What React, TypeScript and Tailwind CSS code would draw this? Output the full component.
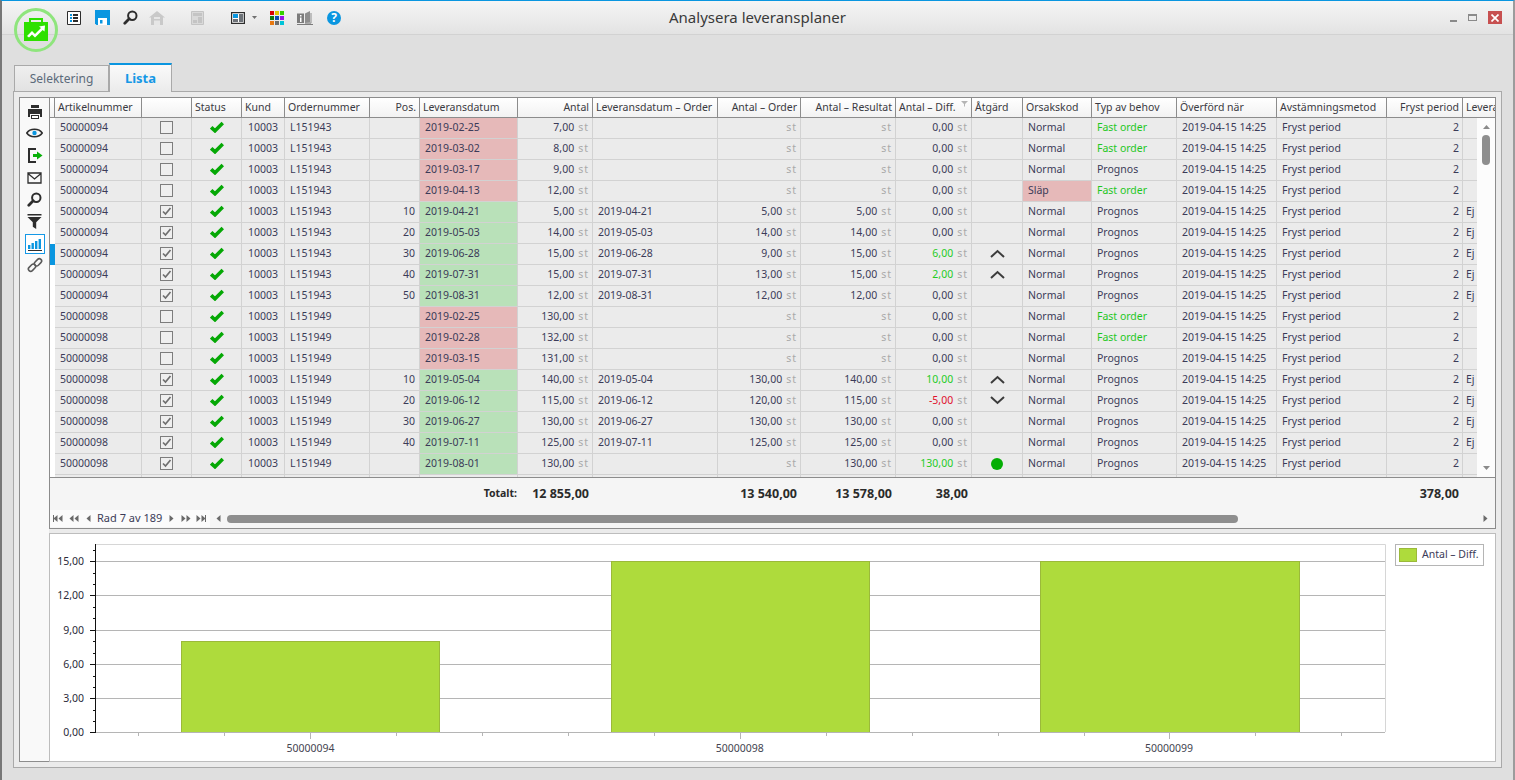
import type { ReactNode } from 'react';

const COLS =
  'grid grid-cols-[5px_87px_50px_50px_43px_85px_50px_98px_75px_125px_83px_95px_76px_51px_69px_85px_100px_110px_76px_32px]';

type Row = {
  art: string;
  order: string;
  pos: string;
  date: string;
  ok: boolean;
  antal: string;
  orderDate: string;
  antalOrder: string;
  result: string;
  diff: string;
  tone?: 'up' | 'down';
  action?: 'up' | 'down' | 'dot';
  reason: string;
  typ: string;
  ej: boolean;
};

function open(art: string, order: string, date: string, antal: string, typ: string, reason = 'Normal'): Row {
  return { art, order, pos: '', date, ok: false, antal, orderDate: '', antalOrder: '', result: '', diff: '0,00', reason, typ, ej: false };
}

function done(
  art: string,
  order: string,
  pos: string,
  date: string,
  antal: string,
  antalOrder: string,
  diff = '0,00',
  tone?: 'up' | 'down',
  action?: 'up' | 'down',
): Row {
  return { art, order, pos, date, ok: true, antal, orderDate: date, antalOrder, result: antal, diff, tone, action, reason: 'Normal', typ: 'Prognos', ej: true };
}

const rows: Row[] = [
  open('50000094', 'L151943', '2019-02-25', '7,00', 'Fast order'),
  open('50000094', 'L151943', '2019-03-02', '8,00', 'Fast order'),
  open('50000094', 'L151943', '2019-03-17', '9,00', 'Prognos'),
  open('50000094', 'L151943', '2019-04-13', '12,00', 'Fast order', 'Släp'),
  done('50000094', 'L151943', '10', '2019-04-21', '5,00', '5,00'),
  done('50000094', 'L151943', '20', '2019-05-03', '14,00', '14,00'),
  done('50000094', 'L151943', '30', '2019-06-28', '15,00', '9,00', '6,00', 'up', 'up'),
  done('50000094', 'L151943', '40', '2019-07-31', '15,00', '13,00', '2,00', 'up', 'up'),
  done('50000094', 'L151943', '50', '2019-08-31', '12,00', '12,00'),
  open('50000098', 'L151949', '2019-02-25', '130,00', 'Fast order'),
  open('50000098', 'L151949', '2019-02-28', '132,00', 'Fast order'),
  open('50000098', 'L151949', '2019-03-15', '131,00', 'Prognos'),
  done('50000098', 'L151949', '10', '2019-05-04', '140,00', '130,00', '10,00', 'up', 'up'),
  done('50000098', 'L151949', '20', '2019-06-12', '115,00', '120,00', '-5,00', 'down', 'down'),
  done('50000098', 'L151949', '30', '2019-06-27', '130,00', '130,00'),
  done('50000098', 'L151949', '40', '2019-07-11', '125,00', '125,00'),
  {
    art: '50000098',
    order: 'L151949',
    pos: '',
    date: '2019-08-01',
    ok: true,
    antal: '130,00',
    orderDate: '',
    antalOrder: '',
    result: '130,00',
    diff: '130,00',
    tone: 'up',
    action: 'dot',
    reason: 'Normal',
    typ: 'Prognos',
    ej: false,
  },
];

const headers: { label: string; right?: boolean }[] = [
  { label: 'Artikelnummer' },
  { label: '' },
  { label: 'Status' },
  { label: 'Kund' },
  { label: 'Ordernummer' },
  { label: 'Pos.', right: true },
  { label: 'Leveransdatum' },
  { label: 'Antal', right: true },
  { label: 'Leveransdatum – Order' },
  { label: 'Antal – Order', right: true },
  { label: 'Antal – Resultat', right: true },
  { label: 'Antal – Diff.' },
  { label: 'Åtgärd' },
  { label: 'Orsakskod' },
  { label: 'Typ av behov' },
  { label: 'Överförd när' },
  { label: 'Avstämningsmetod' },
  { label: 'Fryst period', right: true },
  { label: 'Leverans' },
];

function Cell({ children, className = '' }: { children?: ReactNode; className?: string }) {
  return (
    <div className={`flex items-center overflow-hidden whitespace-nowrap border-r border-b border-[#d2d2d2] ${className}`}>
      {children}
    </div>
  );
}

function Unit({ value, className = '' }: { value?: string; className?: string }) {
  return (
    <Cell className="justify-end pr-[3px]">
      {value && <span className={className}>{value}</span>}
      <span className="ml-[4px] tracking-[1px] text-[#a9a9a9]">st</span>
    </Cell>
  );
}

function Check() {
  return (
    <svg className="mb-[2px]" width="14" height="12" viewBox="0 0 14 12">
      <path d="M1.2 6.300 L5 9.800 L12.800 2" fill="none" stroke="#05a805" strokeWidth="3.600" />
    </svg>
  );
}

function Checkbox({ on }: { on: boolean }) {
  return (
    <div className="mb-[2px] flex h-[13px] w-[13px] items-center justify-center border border-[#7d7d7d] bg-[#efefef]">
      {on && (
        <svg width="11" height="11" viewBox="0 0 11 11">
          <path d="M2 5.500 L4.500 8 L9.500 2" fill="none" stroke="#6f6f6f" strokeWidth="1.700" />
        </svg>
      )}
    </div>
  );
}

function Action({ kind }: { kind?: Row['action'] }) {
  if (kind === 'dot') return <div className="mb-[1px] h-[12px] w-[12px] rounded-full bg-[#04ae04]" />;
  if (!kind) return null;
  return (
    <svg className="mb-[2px]" width="15" height="9" viewBox="0 0 15 9">
      <path d={kind === 'up' ? 'M1 8 L7.500 2 L14 8' : 'M1 1 L7.500 7 L14 1'} fill="none" stroke="#3c3c3c" strokeWidth="2" />
    </svg>
  );
}

function DataRow({ row, active }: { row: Row; active: boolean }) {
  const diffColor = row.tone === 'up' ? 'text-[#1fcb1f]' : row.tone === 'down' ? 'text-[#e0102c]' : '';
  return (
    <div className={`${COLS} h-[21px]`}>
      <div className={active ? 'bg-[#0a96e0]' : 'bg-white'} />
      <Cell className="pl-[5px]">{row.art}</Cell>
      <Cell className="justify-center">
        <Checkbox on={row.ok} />
      </Cell>
      <Cell className="justify-center">
        <Check />
      </Cell>
      <Cell className="pl-[6px]">10003</Cell>
      <Cell className="pl-[5px]">{row.order}</Cell>
      <Cell className="justify-end pr-[4px]">{row.pos}</Cell>
      <Cell className={`pl-[5px] ${row.ok ? 'bg-[#b9e1b9]' : 'bg-[#e6b9b9]'}`}>{row.date}</Cell>
      <Unit value={row.antal} />
      <Cell className="pl-[5px]">{row.orderDate}</Cell>
      <Unit value={row.antalOrder} />
      <Unit value={row.result} />
      <Unit value={row.diff} className={diffColor} />
      <Cell className="justify-center">
        <Action kind={row.action} />
      </Cell>
      <Cell className={`pl-[5px] ${row.reason === 'Släp' ? 'bg-[#e6b9b9]' : ''}`}>{row.reason}</Cell>
      <Cell className={`pl-[5px] ${row.typ === 'Fast order' ? 'text-[#1fc71f]' : ''}`}>{row.typ}</Cell>
      <Cell className="pl-[5px]">2019-04-15 14:25</Cell>
      <Cell className="pl-[5px]">Fryst period</Cell>
      <Cell className="justify-end pr-[3px]">2</Cell>
      <Cell className="pl-[3px]">{row.ej ? 'Ej' : ''}</Cell>
    </div>
  );
}

function PrinterIcon() {
  return (
    <svg width="16" height="16" viewBox="0 0 16 16">
      <path d="M4 1h8v3H4z M1 5h14v8h-2v-3H3v3H1z M4 11h8v4H4z" fill="#2d2d2d" />
      <path d="M5 12h6v2H5z" fill="#fff" />
    </svg>
  );
}

function EyeIcon() {
  return (
    <svg width="17" height="12" viewBox="0 0 17 12">
      <path d="M0.800 6 C4 1 13 1 16.200 6 C13 11 4 11 0.800 6 Z" fill="none" stroke="#2d2d2d" strokeWidth="1.600" />
      <circle cx="8.500" cy="6" r="2.200" fill="#0a96e0" />
    </svg>
  );
}

function ExportIcon() {
  return (
    <svg width="16" height="16" viewBox="0 0 16 16">
      <path d="M9 2H2V15H9" fill="none" stroke="#2d2d2d" strokeWidth="2" />
      <path d="M6 7h4V4.500L15.500 8.500 10 12.500V10H6z" fill="#08b008" />
    </svg>
  );
}

function MailIcon() {
  return (
    <svg width="15" height="12" viewBox="0 0 15 12">
      <path d="M1 1h13v10H1z M1 1.500l6.500 5.500L14 1.500" fill="none" stroke="#2d2d2d" strokeWidth="1.300" />
    </svg>
  );
}

function SearchIcon() {
  return (
    <svg width="15" height="15" viewBox="0 0 15 15">
      <circle cx="9.300" cy="5.700" r="4.200" fill="none" stroke="#2d2d2d" strokeWidth="2" />
      <path d="M6.200 8.800 L1.800 13.200" stroke="#2d2d2d" strokeWidth="2.800" strokeLinecap="round" />
    </svg>
  );
}

function FilterIcon() {
  return (
    <svg width="15" height="15" viewBox="0 0 15 15">
      <path d="M0.500 0h14v1.600H0.500z M0.500 3h14L9.200 8.300V15L5.800 12.800V8.300z" fill="#2d2d2d" />
    </svg>
  );
}

function BarsIcon() {
  return (
    <svg width="16" height="15" viewBox="0 0 16 15">
      <path d="M1 8h2.400v4H1z M4.500 6h2.400v6H4.500z M8 4h2.400v8H8z M11.600 2H14v10h-2.400z" fill="#0a96e0" />
      <path d="M1 13.500h14" stroke="#2d2d2d" strokeWidth="1" />
    </svg>
  );
}

function LinkIcon() {
  return (
    <svg width="16" height="16" viewBox="0 0 16 16" fill="none" stroke="#5a5a5a" strokeWidth="1.600">
      <rect x="0.900" y="8.400" width="8.200" height="4.600" rx="2.300" transform="rotate(-45 5 10.700)" />
      <rect x="6.900" y="3" width="8.200" height="4.600" rx="2.300" transform="rotate(-45 11 5.300)" />
    </svg>
  );
}

function Logo() {
  return (
    <svg className="absolute top-[6px] left-[12px]" width="44" height="46" viewBox="0 0 44 46">
      <circle cx="22" cy="23" r="20.500" fill="none" stroke="#8fe57d" strokeWidth="3" />
      <path d="M16 16v-4h12v4" fill="none" stroke="#2ee000" strokeWidth="2" />
      <path d="M10 15h24v19H10z" fill="#2ee000" />
      <path d="M13 29l5-5 3 3 6-6-2-1.500 6-1-.5 6-1.800-1.600-7.700 7.600-3-3-3 3z" fill="#fff" />
    </svg>
  );
}

function ListIcon() {
  return (
    <svg width="14" height="14" viewBox="0 0 14 14">
      <path d="M0.500 0.500h13v13h-13z" fill="#fff" stroke="#2d2d2d" />
      <path d="M3 3h2v2H3z M3 6h2v2H3z M3 9h2v2H3z" fill="#0a96e0" />
      <path d="M6 3h5v2H6z M6 6h5v2H6z M6 9h5v2H6z" fill="#2d2d2d" />
    </svg>
  );
}

function SaveIcon() {
  return (
    <svg width="15" height="15" viewBox="0 0 15 15">
      <path d="M0 0h15v15H1.500L0 13.500z" fill="#0a96e0" />
      <path d="M3 8h9v7H3z" fill="#fff" />
      <path d="M5 10h2.500v3.500H5z" fill="#0a96e0" />
    </svg>
  );
}

function HomeIcon() {
  return (
    <svg width="16" height="14" viewBox="0 0 16 14">
      <path d="M8 0L16 6.500H14V14H2V6.500H0z" fill="#c9c9c9" />
      <path d="M5 6h6v2H5z M5 9.500h6V14H5z" fill="#e6e6e6" />
    </svg>
  );
}

function FormIcon() {
  return (
    <svg width="13" height="14" viewBox="0 0 13 14">
      <path d="M0.500 0.500h12v13H0.500z" fill="#d9d9d9" stroke="#c4c4c4" />
      <path d="M2 2h9v3H2z M7 6h4v6H7z M2 9h4v3H2z" fill="#c4c4c4" />
    </svg>
  );
}

function LayoutIcon() {
  return (
    <svg width="14" height="12" viewBox="0 0 14 12">
      <path d="M0.600 0.600h12.800v10.800H0.600z" fill="#fff" stroke="#2d2d2d" strokeWidth="1.200" />
      <path d="M2 2h5v4H2z" fill="#0a96e0" />
      <path d="M8 2h4.200v8H8z M2 7h5v3H2z" fill="#6d7278" />
    </svg>
  );
}

function AppsIcon() {
  const colors = ['#d80000', '#e0c800', '#35d000', '#0f7a10', '#0a4fb0', '#9a10e8', '#e87810', '#6e6e6e', '#00c4d8'];
  return (
    <div className="grid h-[14px] w-[14px] grid-cols-3 gap-px">
      {colors.map((c) => (
        <div key={c} style={{ backgroundColor: c }} />
      ))}
    </div>
  );
}

function BookIcon() {
  return (
    <svg width="16" height="14" viewBox="0 0 16 14">
      <path d="M0 2.500h7V12H0z" fill="#7b7b7b" />
      <path d="M8 2.500L13 0v11.500L8 12z" fill="#8d8d8d" />
      <path d="M14 2v10.200H8" fill="none" stroke="#8d8d8d" />
      <path d="M3 4h1.500v1.500H3z M3 6.500h1.500V11H3z" fill="#fff" />
      <path d="M0 13.500h16" stroke="#7b7b7b" />
    </svg>
  );
}

function HelpIcon() {
  return (
    <div className="flex h-[14px] w-[14px] items-center justify-center rounded-full bg-[#0a96e0] text-[12px] leading-none font-bold text-white">?</div>
  );
}

function Tri({ dir, bar }: { dir: 'l' | 'r'; bar?: boolean }) {
  return (
    <svg width="5" height="7" viewBox="0 0 5 7">
      <path d={dir === 'l' ? 'M4.500 0v7L0.500 3.500z' : 'M0.500 0v7L4.500 3.500z'} fill="#6a6a6a" />
      {bar && <path d={dir === 'l' ? 'M0 0h1v7H0z' : 'M4 0h1v7H4z'} fill="#6a6a6a" />}
    </svg>
  );
}

function Chart() {
  const major = [561, 595, 629.5, 664, 698, 732];
  const labels = ['15,00', '12,00', '9,00', '6,00', '3,00', '0,00'];
  const minor = [550, 572.5, 584, 606.5, 618, 641, 652.5, 675.5, 687, 709.5, 721];
  const xTicks = [138, 224, 396, 482, 568, 654, 826, 912, 998, 1084, 1255, 1341];
  const bars = [
    { x: 181, top: 641, w: 258 },
    { x: 611, top: 561, w: 258 },
    { x: 1040, top: 561, w: 259 },
  ];
  return (
    <svg width="1340" height="227" viewBox="50 534 1340 227" className="shrink-0">
      <path d="M95 544.500H1385.500V732" fill="none" stroke="#d6d6d6" />
      {major.slice(0, 5).map((y) => (
        <path key={y} d={`M95 ${Math.round(y) + 0.5}H1385`} stroke="#b5b5b5" />
      ))}
      {bars.map((b) => (
        <rect key={b.x} x={b.x + 0.5} y={b.top + 0.5} width={b.w} height={732 - b.top} fill="#aedb3c" stroke="#9bb93a" />
      ))}
      <path d="M95 732.500H1385" stroke="#b5b5b5" />
      {xTicks.map((x) => (
        <path key={x} d={`M${x + 0.5} 733v3`} stroke="#b5b5b5" />
      ))}
      {[310, 740, 1169].map((x) => (
        <path key={x} d={`M${x + 0.5} 733v6`} stroke="#b5b5b5" />
      ))}
      <path d="M95.500 544V733" stroke="#111" />
      {major.map((y) => (
        <path key={y} d={`M90 ${Math.round(y) + 0.5}H95`} stroke="#111" />
      ))}
      {minor.map((y) => (
        <path key={y} d={`M93 ${Math.round(y) + 0.5}H95`} stroke="#111" />
      ))}
      <g fontFamily="'Noto Sans', sans-serif" fontSize="10.500">
        {labels.map((t, i) => (
          <text key={t} x="84" y={major[i] + 4} textAnchor="end" fill="#2b2b3a">
            {t}
          </text>
        ))}
        {['50000094', '50000098', '50000099'].map((t, i) => (
          <text key={t} x={310.5 + i * 429.3} y="752" textAnchor="middle" fill="#444450">
            {t}
          </text>
        ))}
      </g>
    </svg>
  );
}

export default function App() {
  return (
    <div className="relative flex h-[780px] w-[1515px] flex-col overflow-hidden border-t border-r-2 border-l-2 border-t-[#0a96e0] border-r-[#9c9c9c] border-l-[#777] bg-[#dfdfdf] font-['Noto_Sans',sans-serif] text-[10.5px] text-[#3b3b58]">
      <Logo />
      <div className="grid h-[34px] shrink-0 grid-cols-[1fr_auto_1fr] items-center border-b border-[#d2d2d2] bg-gradient-to-b from-[#f5f5f5] to-[#e3e3e3]">
        <div className="flex items-center pl-[62px]">
          <div className="flex w-5 justify-center"><ListIcon /></div>
          <div className="ml-2 flex w-5 justify-center"><SaveIcon /></div>
          <div className="ml-2 flex w-5 justify-center"><SearchIcon /></div>
          <div className="ml-[7px] flex w-5 justify-center"><HomeIcon /></div>
          <div className="ml-5 flex w-5 justify-center"><FormIcon /></div>
          <div className="ml-[21px] flex w-5 justify-center"><LayoutIcon /></div>
          <svg className="ml-1" width="5" height="3" viewBox="0 0 5 3"><path d="M0 0h5L2.500 3z" fill="#707070" /></svg>
          <div className="ml-[10px] flex w-5 justify-center"><AppsIcon /></div>
          <div className="ml-2 flex w-5 justify-center"><BookIcon /></div>
          <div className="ml-[9px] flex w-5 justify-center"><HelpIcon /></div>
        </div>
        <div className="text-[15px] text-[#3a3a3a]">Analysera leveransplaner</div>
        <div className="flex items-center justify-end pr-[11px]">
          <div className="mt-[7px] h-[2px] w-[7px] bg-[#8a8a8a]" />
          <div className="ml-[11px] h-[7px] w-[9px] border border-t-2 border-[#8a8a8a]" />
          <div className="ml-[11px] flex h-[13px] w-[14px] items-center justify-center bg-[#c75050]">
            <svg width="8" height="8" viewBox="0 0 8 8"><path d="M0.500 0.500L7.500 7.500M7.500 0.500L0.500 7.500" stroke="#fff" strokeWidth="1.700" /></svg>
          </div>
        </div>
      </div>

      <div className="flex h-[56px] shrink-0 items-end pl-3">
        <div className="flex h-[26px] w-[95px] items-center justify-center border-x border-t border-[#a9a9a9] bg-gradient-to-b from-[#efefef] to-[#e2e2e2] text-[12px] text-[#5b6a7a]">
          Selektering
        </div>
        <div className="relative z-10 -mb-px flex h-[29px] w-[63px] items-center justify-center border-x border-t-2 border-x-[#a9a9a9] border-t-[#0a96e0] bg-gradient-to-b from-[#fafafa] to-[#ebebeb] text-[13px] font-bold text-[#1598e6]">
          Lista
        </div>
      </div>

      <div className="ml-[11px] flex h-[677px] w-[1489px] border border-[#a9a9a9] bg-[#ebebeb] p-[5px]">
        <div className="flex w-[30px] shrink-0 flex-col items-center border-y border-l border-[#8c8c8c] bg-[#f9f9f9] pt-[4px]">
          <div className="flex h-[20px] items-center"><PrinterIcon /></div>
          <div className="flex h-[22px] items-center"><EyeIcon /></div>
          <div className="flex h-[22px] items-center"><ExportIcon /></div>
          <div className="flex h-[24px] items-center"><MailIcon /></div>
          <div className="flex h-[18px] items-center"><SearchIcon /></div>
          <div className="flex h-[26px] items-center"><FilterIcon /></div>
          <div className="flex h-[20px] w-[20px] items-center justify-center border border-[#1598e6] bg-white"><BarsIcon /></div>
          <div className="mt-[1px] flex h-[20px] items-center"><LinkIcon /></div>
        </div>

        <div className="flex min-w-0 flex-1 flex-col">
          <div className="flex h-[432px] shrink-0 flex-col border border-[#8c8c8c] bg-[#f5f5f5]">
            <div className={`${COLS} h-[20px] shrink-0 border-b border-[#8c8c8c] bg-gradient-to-b from-white to-[#f2f2f2] text-[#3a3a42]`}>
              <div className="border-r border-[#8c8c8c]" />
              {headers.map((h, i) => (
                <div
                  key={i}
                  className={`relative flex items-center overflow-hidden whitespace-nowrap border-r border-[#8c8c8c] last:border-r-0 ${h.right ? 'justify-end pr-[3px]' : 'pl-[3px]'}`}
                >
                  {h.label}
                  {h.label === 'Antal – Diff.' && (
                    <svg className="absolute top-[3px] right-[3px]" width="7" height="6" viewBox="0 0 7 6">
                      <path d="M0 0h7L4 3v3L3 5V3z" fill="#b5b5b5" />
                    </svg>
                  )}
                </div>
              ))}
            </div>
            <div className="flex h-[360px] shrink-0 border-b border-[#8c8c8c]">
              <div className="w-[1427px] overflow-hidden bg-[#ebebeb]">
                {rows.map((row, i) => (
                  <DataRow key={i} row={row} active={i === 6} />
                ))}
                <div className={`${COLS} h-[21px]`}>
                  <div className="bg-white" />
                  {headers.map((h) => (
                    <Cell key={h.label} />
                  ))}
                </div>
              </div>
              <div className="relative flex flex-1 flex-col items-center bg-[#fcfcfc]">
                <svg className="mt-[7px]" width="7" height="4" viewBox="0 0 7 4"><path d="M3.500 0L7 4H0z" fill="#8a8a8a" /></svg>
                <div className="mt-[6px] h-[30px] w-[8px] rounded-[4px] bg-[#8e8e8e]" />
                <svg className="mt-auto mb-[7px]" width="7" height="4" viewBox="0 0 7 4"><path d="M3.500 4L7 0H0z" fill="#8a8a8a" /></svg>
              </div>
            </div>
            <div className={`${COLS} h-[32px] shrink-0 items-center text-[12.5px] font-bold text-[#2b2b2b]`}>
              <div className="col-start-8 pr-[1px] text-right text-[10.5px]">Totalt:</div>
              <div className="col-start-9 pr-[4px] text-right whitespace-nowrap">12 855,00</div>
              <div className="col-start-11 pr-[4px] text-right whitespace-nowrap">13 540,00</div>
              <div className="col-start-12 pr-[4px] text-right whitespace-nowrap">13 578,00</div>
              <div className="col-start-13 pr-[4px] text-right">38,00</div>
              <div className="col-start-19 pr-[4px] text-right">378,00</div>
            </div>
            <div className="flex h-[17px] shrink-0 items-center">
              <div className="flex h-full w-[160px] items-center bg-[#fbfbfb] pl-[3px]">
                <span className="flex w-[12px]"><Tri dir="l" bar /><Tri dir="l" /></span>
                <span className="ml-[4px] flex w-[12px]"><Tri dir="l" /><Tri dir="l" /></span>
                <span className="ml-[5px] w-[6px]"><Tri dir="l" /></span>
                <span className="ml-[5px] text-[11px] whitespace-nowrap">Rad 7 av 189</span>
                <span className="ml-[7px] w-[6px]"><Tri dir="r" /></span>
                <span className="ml-[6px] flex w-[12px]"><Tri dir="r" /><Tri dir="r" /></span>
                <span className="ml-[3px] flex w-[12px]"><Tri dir="r" /><Tri dir="r" bar /></span>
              </div>
              <div className="ml-[6px]"><Tri dir="l" /></div>
              <div className="ml-[6px] h-[8px] w-[1011px] rounded-[4px] bg-[#8e8e8e]" />
              <div className="ml-[245px]"><Tri dir="r" /></div>
            </div>
          </div>

          <div className="mt-[4px] flex min-h-0 flex-1 border border-[#bdbdbd] bg-white">
            <Chart />
            <div className="mt-[10px] ml-[5px] flex h-[22px] w-[89px] items-center border border-[#b5b5b5] pl-[3px] whitespace-nowrap">
              <div className="h-[14px] w-[18px] shrink-0 border border-[#9bb93a] bg-[#aedb3c]" />
              <span className="ml-[5px]">Antal – Diff.</span>
            </div>
          </div>
        </div>
      </div>
    </div>
  );
}
